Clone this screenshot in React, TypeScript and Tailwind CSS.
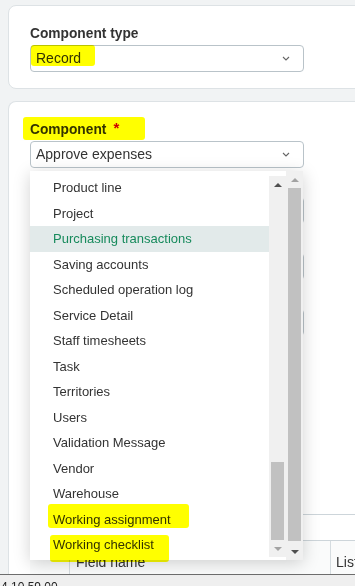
import React from "react";

const items = [
  "Product line",
  "Project",
  "Purchasing transactions",
  "Saving accounts",
  "Scheduled operation log",
  "Service Detail",
  "Staff timesheets",
  "Task",
  "Territories",
  "Users",
  "Validation Message",
  "Vendor",
  "Warehouse",
  "Working assignment",
  "Working checklist",
];

function Chevron() {
  return (
    <svg width="8" height="5" viewBox="0 0 8 5" fill="none">
      <path d="M1 1 L4 4 L7 1" stroke="#666" strokeWidth="1.1" />
    </svg>
  );
}

function SelectBox({ value }: { value?: string }) {
  return (
    <div className="mt-[3px] w-[274px] h-[27px] border border-[#b9c3c9] rounded-[4px] flex items-center justify-between pl-[5px] pr-[13px] text-[14px] text-[#333] bg-white">
      <span>{value ?? ""}</span>
      <Chevron />
    </div>
  );
}

function UpArrow({ dark }: { dark: boolean }) {
  return (
    <div className="h-[17px] flex items-center justify-center">
      <div
        className={
          dark
            ? "w-0 h-0 border-x-[4px] border-x-transparent border-b-[4px] border-b-[#505050]"
            : "w-0 h-0 border-x-[4px] border-x-transparent border-b-[4px] border-b-[#a3a3a3]"
        }
      />
    </div>
  );
}

function DownArrow({ dark }: { dark: boolean }) {
  return (
    <div className="h-[17px] flex items-center justify-center">
      <div
        className={
          dark
            ? "w-0 h-0 border-x-[4px] border-x-transparent border-t-[4px] border-t-[#505050]"
            : "w-0 h-0 border-x-[4px] border-x-transparent border-t-[4px] border-t-[#a3a3a3]"
        }
      />
    </div>
  );
}

export default function App() {
  return (
    <div className="relative w-[355px] h-[586px] overflow-hidden bg-[#f1f3f4] flex flex-col font-['Liberation_Sans',Arial,sans-serif]">
      {/* Card 1 */}
      <div className="mt-[5px] ml-[8px] w-[400px] h-[84px] shrink-0 bg-white border border-[#dde2e5] rounded-[8px] pt-[20px] pl-[21px]">
        <div className="text-[13.75px] font-bold leading-[16px] text-[#333]">Component type</div>
        <SelectBox value="Record" />
      </div>

      {/* Card 2 */}
      <div className="mt-[12px] ml-[8px] w-[400px] flex-1 bg-white border border-b-0 border-[#dde2e5] rounded-t-[8px] pt-[20px] pl-[21px] flex flex-col overflow-hidden">
        <div className="text-[13.75px] font-bold leading-[16px] text-[#333] flex items-start">
          <span>Component</span>
          <span className="ml-[7px] text-[#cc0000] text-[15px] leading-[12px]">*</span>
        </div>
        <SelectBox value="Approve expenses" />
        {[0, 1, 2].map((f) => (
          <div key={f} className="mt-[10px]">
            <div className="h-[16px]" />
            <SelectBox />
          </div>
        ))}
        <div className="h-[179px] shrink-0 border-b border-[#cdd5da]" />
        <div className="h-[26px] shrink-0 border-b border-[#cdd5da]" />
        <div className="flex flex-1 bg-[#fafbfb] text-[14px] text-[#333] leading-[16px]">
          <div className="w-[40px] border-r border-[#d5dce0]" />
          <div className="w-[261px] border-r border-[#d5dce0] pl-[6px] pt-[13px]">Field name</div>
          <div className="flex-1 pl-[5px] pt-[13px]">List</div>
        </div>
      </div>

      {/* Footer */}
      <div className="h-[12px] shrink-0 border-t border-[#6d6d6d] bg-[#efefef] overflow-hidden">
        <div className="mt-[5px] pl-[1px] text-[12px] leading-[14px] text-[#222]">4 10 59 00</div>
      </div>

      {/* Dropdown */}
      <div className="absolute top-[171px] left-[30px] w-[273px] h-[389px] bg-white shadow-[0_3px_16px_rgba(0,0,0,0.18)] flex">
        <div className="w-[239px] pt-[4px]">
          {items.map((it) => (
            <div
              key={it}
              className={
                it === "Purchasing transactions"
                  ? "h-[25.5px] leading-[25.5px] pl-[23px] text-[13px] bg-[#e2eaea] text-[#178a5c]"
                  : "h-[25.5px] leading-[25.5px] pl-[23px] text-[13px] text-[#333]"
              }
            >
              {it}
            </div>
          ))}
        </div>
        {/* inner scrollbar */}
        <div className="w-[17px] mt-[5px] mb-[3px] bg-[#f0f0f0] flex flex-col">
          <UpArrow dark={true} />
          <div className="flex-1 px-[2px]">
            <div className="mt-[269px] h-[78px] bg-[#c1c1c1]" />
          </div>
          <DownArrow dark={false} />
        </div>
        {/* outer scrollbar */}
        <div className="w-[17px] bg-[#f0f0f0] flex flex-col">
          <UpArrow dark={false} />
          <div className="flex-1 px-[2px] pb-[2px] flex flex-col">
            <div className="flex-1 bg-[#c1c1c1]" />
          </div>
          <DownArrow dark={true} />
        </div>
      </div>

      {/* Highlighter marks */}
      <div className="absolute left-[31px] top-[45px] w-[64px] h-[21px] bg-[#ffff00] mix-blend-multiply rounded-[3px]" />
      <div className="absolute left-[23px] top-[117px] w-[122px] h-[23px] bg-[#ffff00] mix-blend-multiply rounded-[3px]" />
      <div className="absolute left-[48px] top-[504px] w-[141px] h-[24px] bg-[#ffff00] mix-blend-multiply rounded-[3px]" />
      <div className="absolute left-[50px] top-[535px] w-[119px] h-[27px] bg-[#ffff00] mix-blend-multiply rounded-[3px]" />
    </div>
  );
}
